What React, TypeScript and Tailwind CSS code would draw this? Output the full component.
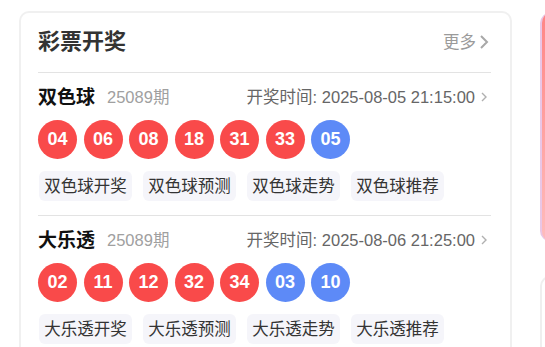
import React from "react";

type Lottery = {
  name: string;
  issue: string;
  time: string;
  red: string[];
  blue: string[];
  tags: string[];
};

const data: Lottery[] = [
  {
    name: "双色球",
    issue: "25089期",
    time: "开奖时间: 2025-08-05 21:15:00",
    red: ["04", "06", "08", "18", "31", "33"],
    blue: ["05"],
    tags: ["双色球开奖", "双色球预测", "双色球走势", "双色球推荐"],
  },
  {
    name: "大乐透",
    issue: "25089期",
    time: "开奖时间: 2025-08-06 21:25:00",
    red: ["02", "11", "12", "32", "34"],
    blue: ["03", "10"],
    tags: ["大乐透开奖", "大乐透预测", "大乐透走势", "大乐透推荐"],
  },
];

function SmallChevron() {
  return (
    <svg width="8" height="10" viewBox="0 0 8 10" className="ml-[5px] mr-[3px] shrink-0">
      <path d="M2 1 L6 5 L2 9" fill="none" stroke="#b0b0b0" strokeWidth="1.4" />
    </svg>
  );
}

function Ball({ n, blue }: { n: string; blue?: boolean }) {
  return (
    <div
      className={
        "w-[39px] h-[39px] rounded-full flex items-center justify-center text-white font-bold text-[18px] font-['Liberation_Sans',sans-serif] " +
        (blue ? "bg-[#5d8af7]" : "bg-[#f94a4a]")
      }
    >
      {n}
    </div>
  );
}

function Section({ item }: { item: Lottery }) {
  return (
    <div className="border-t border-[#e3e3e3] pt-[12px] pb-[14px]">
      <div className="h-[24px] flex items-center">
        <span className="text-[19px] font-bold text-[#111] leading-none">{item.name}</span>
        <span className="ml-[12px] text-[16.5px] text-[#a0a0a0] leading-none">{item.issue}</span>
        <span className="ml-auto text-[16.5px] text-[#666] leading-none">{item.time}</span>
        <SmallChevron />
      </div>
      <div className="mt-[11px] flex gap-[6.5px]">
        {item.red.map((n, i) => (
          <Ball key={"r" + i} n={n} />
        ))}
        {item.blue.map((n, i) => (
          <Ball key={"b" + i} n={n} blue />
        ))}
      </div>
      <div className="mt-[12px] pl-[1px] flex gap-[11px]">
        {item.tags.map((t) => (
          <div
            key={t}
            className="w-[93px] h-[30px] rounded-[6px] bg-[#f5f5fa] text-[#333] text-[16.5px] flex items-center justify-center"
          >
            {t}
          </div>
        ))}
      </div>
    </div>
  );
}

export default function App() {
  return (
    <div className="w-[545px] h-[347px] overflow-hidden bg-white flex items-start pl-[19px] pt-[11px] font-['Liberation_Sans','Noto_Sans_CJK_SC',sans-serif]">
      <div className="w-[493px] h-[360px] shrink-0 rounded-[10px] border-2 border-[#f0f0f0] pl-[17px] pr-[19px] pt-[14px]">
        <div className="h-[30px] flex items-center mb-[15px]">
          <span className="text-[22px] font-bold text-[#333] leading-none">彩票开奖</span>
          <span className="ml-auto text-[16.5px] text-[#9a9a9a] leading-none">更多</span>
          <svg width="10" height="16" viewBox="0 0 10 16" className="ml-[3px] mr-[2px]">
            <path d="M2 2 L8 8 L2 14" fill="none" stroke="#a8a8a8" strokeWidth="2" />
          </svg>
        </div>
        {data.map((d) => (
          <Section key={d.name} item={d} />
        ))}
      </div>
      <div className="ml-[28px] flex flex-col gap-[35px] shrink-0">
        <div className="w-[200px] h-[228px] mt-[2px] rounded-[10px] border-l-2 border-[#e9c6e6] bg-gradient-to-b from-[#ff8585] to-[#ffbcbc]" />
        <div className="w-[200px] h-[120px] rounded-[10px] border-2 border-[#efefef]" />
      </div>
    </div>
  );
}
